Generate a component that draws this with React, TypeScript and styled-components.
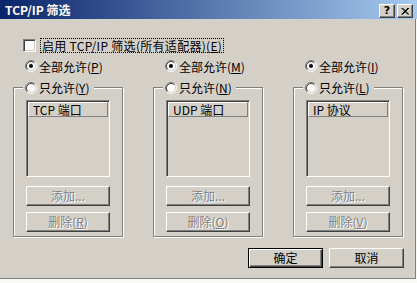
import React from "react";
import styled, { createGlobalStyle } from "styled-components";

const face = "#d4d0c8";

const GlobalStyle = createGlobalStyle`
  html, body {
    margin: 0;
    padding: 0;
    background: #f8f8f6;
  }
  body {
    font-family: "Noto Sans CJK SC", sans-serif;
    font-size: 12px;
    color: #000;
  }
`;

const Window = styled.div`
  width: 417px;
  height: 283px;
  display: flex;
  flex-direction: column;
`;

const TitleBar = styled.div`
  height: 19px;
  flex: none;
  display: flex;
  align-items: flex-start;
  padding: 0 4px 0 5px;
  background: linear-gradient(to right, #0a246a, #a6caf0);
`;

const Title = styled.div`
  flex: 1;
  color: #fff;
  font-weight: bold;
  font-size: 12px;
  line-height: 20px;
`;

const CaptionButton = styled.div`
  width: 16px;
  height: 14px;
  box-sizing: border-box;
  margin: 4px 0 0 2px;
  background: ${face};
  border: 1px solid;
  border-color: #fff #404040 #404040 #fff;
  box-shadow: inset -1px -1px 0 #808080;
  display: flex;
  align-items: center;
  justify-content: center;
  font: bold 11px/12px "DejaVu Sans", sans-serif;
`;

const Body = styled.div`
  width: 416px;
  height: 260px;
  box-sizing: border-box;
  background: ${face};
  border-right: 1px solid #808080;
  border-bottom: 1px solid #808080;
  padding-top: 20px;
`;

const CheckRow = styled.div`
  display: flex;
  align-items: center;
  height: 13px;
  padding-left: 23px;
`;

const CheckBox = styled.div`
  width: 13px;
  height: 13px;
  box-sizing: border-box;
  background: #fff;
  border: 1px solid;
  border-color: #808080 #fff #fff #808080;
  box-shadow: inset 1px 1px 0 #404040, inset -1px -1px 0 ${face};
`;

const FocusLabel = styled.span`
  margin-left: 4px;
  padding: 0 1px;
  line-height: 13px;
  letter-spacing: 0.3px;
  border: 1px dotted #000;
  white-space: nowrap;
`;

const Columns = styled.div`
  display: flex;
  gap: 30px;
  padding-left: 13px;
  margin-top: 8px;
`;

const Column = styled.div`
  width: 110px;
  display: flex;
  flex-direction: column;
`;

const RadioRow = styled.div<{ $top?: boolean }>`
  display: flex;
  align-items: center;
  gap: 2px;
  height: ${(p) => (p.$top ? "12px" : "13px")};
  padding-left: ${(p) => (p.$top ? "12px" : "0")};
  margin-bottom: ${(p) => (p.$top ? "9px" : "0")};
  line-height: 13px;
  white-space: nowrap;
`;

const Group = styled.fieldset`
  margin: 0;
  min-width: 0;
  width: 110px;
  box-sizing: border-box;
  padding: 6px 12px 4px;
  border: 1px solid #808080;
  box-shadow: 1px 1px 0 #fff, inset 1px 1px 0 #fff;
`;

const Legend = styled.legend`
  margin-left: -3px;
  padding: 0 4px 0 2px;
  background: ${face};
`;

const ListBox = styled.div`
  height: 77px;
  box-sizing: border-box;
  padding: 1px;
  margin-bottom: 9px;
  border: 1px solid;
  border-color: #808080 #fff #fff #808080;
  box-shadow: inset 1px 1px 0 #404040, inset -1px -1px 0 ${face};
`;

const ListHeader = styled.div`
  height: 15px;
  box-sizing: border-box;
  padding-left: 4px;
  line-height: 13px;
  border: 1px solid;
  border-color: #fff #808080 #808080 #fff;
`;

const ButtonStack = styled.div`
  display: flex;
  flex-direction: column;
  gap: 6px;
`;

const Button = styled.button<{ $default?: boolean; $width?: number }>`
  display: flex;
  align-items: center;
  justify-content: center;
  width: ${(p) => (p.$width ? `${p.$width}px` : "100%")};
  height: 20px;
  box-sizing: border-box;
  padding: 0;
  margin: 0;
  font-family: "Noto Sans CJK SC", sans-serif;
  font-size: 12px;
  line-height: 14px;
  color: #000;
  background: ${face};
  border: 1px solid;
  border-color: ${(p) =>
    p.$default ? "#000" : "#fff #404040 #404040 #fff"};
  box-shadow: ${(p) =>
    p.$default
      ? "inset 1px 1px 0 #fff, inset -1px -1px 0 #404040, inset -2px -2px 0 #808080"
      : "inset -1px -1px 0 #808080"};
  white-space: nowrap;

  &:disabled {
    color: #808080;
    text-shadow: 1px 1px 0 #fff;
  }
`;

const ButtonRow = styled.div`
  display: flex;
  justify-content: flex-end;
  gap: 6px;
  padding-right: 11px;
  margin-top: 11px;
`;

const Radio = ({ checked }: { checked?: boolean }) => (
  <svg width="12" height="12" viewBox="0 0 12 12" style={{ flex: "none" }}>
    <circle cx="6" cy="6" r="4.5" fill="#fff" />
    <path d="M2.11 9.89 A5.5 5.5 0 0 1 9.89 2.11" stroke="#808080" fill="none" />
    <path d="M9.89 2.11 A5.5 5.5 0 0 1 2.11 9.89" stroke="#fff" fill="none" />
    <path d="M2.82 9.18 A4.5 4.5 0 0 1 9.18 2.82" stroke="#404040" fill="none" />
    <path d="M9.18 2.82 A4.5 4.5 0 0 1 2.82 9.18" stroke={face} fill="none" />
    {checked && <circle cx="6" cy="6" r="2" fill="#000" />}
  </svg>
);

const groups = [
  { all: "P", only: "Y", header: "TCP 端口", del: "R" },
  { all: "M", only: "N", header: "UDP 端口", del: "O" },
  { all: "I", only: "L", header: "IP 协议", del: "V" },
];

export default function App() {
  return (
    <Window>
      <GlobalStyle />
      <TitleBar>
        <Title>TCP/IP 筛选</Title>
        <CaptionButton>?</CaptionButton>
        <CaptionButton>
          <svg width="8" height="7" viewBox="0 0 8 7">
            <path
              d="M0.5 0 L7 6.5 M1.5 0 L8 6.5 M7 0 L0.5 6.5 M8 0 L1.5 6.5"
              stroke="#000"
              strokeWidth="1"
            />
          </svg>
        </CaptionButton>
      </TitleBar>
      <Body>
        <CheckRow>
          <CheckBox />
          <FocusLabel>
            启用 TCP/IP 筛选(所有适配器)(<u>E</u>)
          </FocusLabel>
        </CheckRow>
        <Columns>
          {groups.map((g) => (
            <Column key={g.all}>
              <RadioRow $top>
                <Radio checked />
                <span>
                  全部允许(<u>{g.all}</u>)
                </span>
              </RadioRow>
              <Group>
                <Legend>
                  <RadioRow>
                    <Radio />
                    <span>
                      只允许(<u>{g.only}</u>)
                    </span>
                  </RadioRow>
                </Legend>
                <ListBox>
                  <ListHeader>{g.header}</ListHeader>
                </ListBox>
                <ButtonStack>
                  <Button disabled>添加...</Button>
                  <Button disabled>
                    删除(<u>{g.del}</u>)
                  </Button>
                </ButtonStack>
              </Group>
            </Column>
          ))}
        </Columns>
        <ButtonRow>
          <Button $default $width={75}>
            确定
          </Button>
          <Button $width={75}>取消</Button>
        </ButtonRow>
      </Body>
    </Window>
  );
}
